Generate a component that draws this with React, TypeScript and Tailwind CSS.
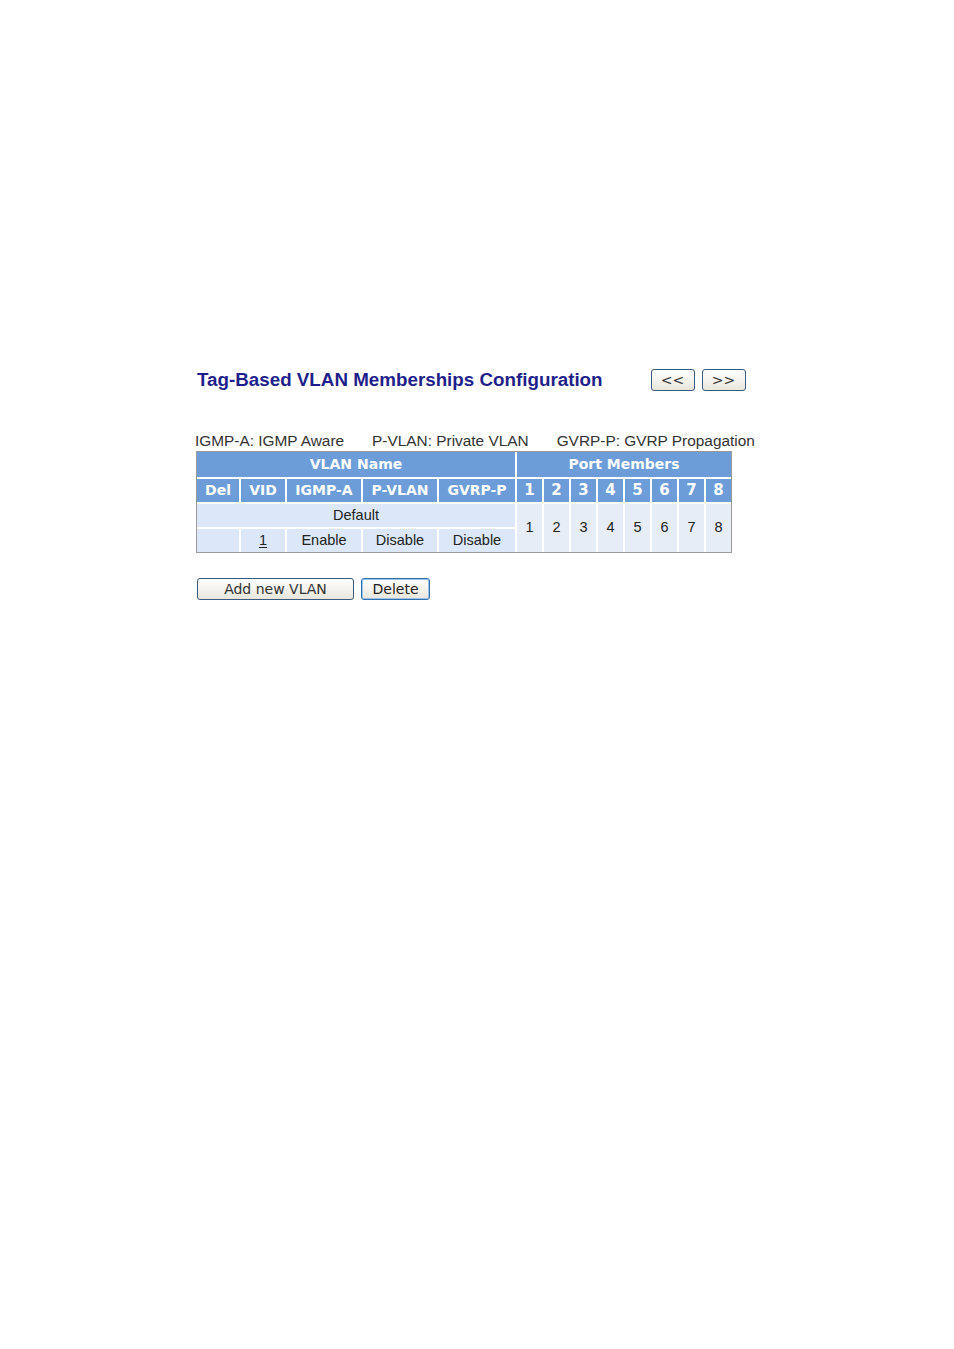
import React from 'react';

const ports = [1, 2, 3, 4, 5, 6, 7, 8];

const head = 'flex items-center justify-center bg-[#6d9dd8] text-white font-bold text-[14px] font-["DejaVu_Sans",Verdana,sans-serif]';
const cell = 'flex items-center justify-center bg-[#dce8fa] text-[14.5px] text-[#222]';
const portCell = 'row-span-2 flex items-center justify-center bg-[#e7edf7] text-[14.5px] text-[#222]';

function PageButton({ label, wide }: { label: string; wide?: string }) {
  return (
    <button
      className={`h-[22px] ${wide ?? 'w-[44px]'} rounded-[3px] border border-[#3a5a80] bg-gradient-to-b from-white to-[#e8e6dc] text-[14px] leading-none text-[#333] font-["DejaVu_Sans",Verdana,sans-serif]`}
    >
      {label}
    </button>
  );
}

export default function App() {
  return (
    <div className='min-h-[1349px] bg-white font-["Liberation_Sans",Arial,sans-serif]'>
      <div className="pl-[196px] pt-[368px]">
        <div className="flex items-center">
          <h1 className="text-[18.8px] font-bold text-[#1f1f8c] leading-[24px] pl-[1px]">
            Tag-Based VLAN Memberships Configuration
          </h1>
          <div className="ml-[48px] flex gap-[7px]">
            <PageButton label="<<" />
            <PageButton label=">>" />
          </div>
        </div>

        <div className="mt-[40px] flex gap-[28px] text-[15.4px] leading-[18px] text-[#333] -ml-[1px]">
          <span>IGMP-A: IGMP Aware</span>
          <span>P-VLAN: Private VLAN</span>
          <span>GVRP-P: GVRP Propagation</span>
        </div>

        <div className="mt-[1px] inline-block border border-[#999] bg-white">
          <div className="grid grid-cols-[42px_44px_74px_74px_76px_repeat(8,25px)] grid-rows-[25px_23px_23px_23px] gap-[2px]">
            <div className={`${head} col-span-5`}>VLAN Name</div>
            <div className={`${head} col-span-8`}>Port Members</div>

            <div className={head}>Del</div>
            <div className={head}>VID</div>
            <div className={head}>IGMP-A</div>
            <div className={head}>P-VLAN</div>
            <div className={head}>GVRP-P</div>
            {ports.map((p) => (
              <div key={`h${p}`} className={`${head} text-[15px]`}>
                {p}
              </div>
            ))}

            <div className={`${cell} col-span-5`}>Default</div>
            {ports.map((p) => (
              <div key={`p${p}`} className={portCell}>
                {p}
              </div>
            ))}

            <div className={cell}></div>
            <div className={cell}>
              <span className="underline underline-offset-2">1</span>
            </div>
            <div className={cell}>Enable</div>
            <div className={cell}>Disable</div>
            <div className={cell}>Disable</div>
          </div>
        </div>

        <div className="mt-[25px] flex gap-[7px] pl-[1px]">
          <PageButton label="Add new VLAN" wide="w-[157px]" />
          <button className='h-[22px] w-[69px] rounded-[3px] border border-[#2f6fb0] shadow-[inset_0_0_0_1px_#9cc3ea] bg-gradient-to-b from-white to-[#e8e6dc] text-[14px] leading-none text-[#222] font-["DejaVu_Sans",Verdana,sans-serif]'>
            Delete
          </button>
        </div>
      </div>
    </div>
  );
}
